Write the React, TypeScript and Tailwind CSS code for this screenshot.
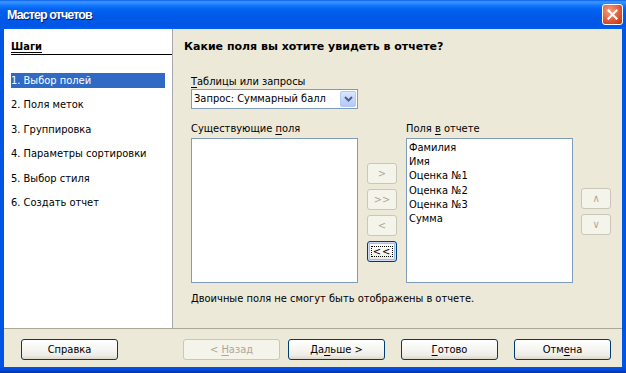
import React from "react";

const btnEnabled =
  "flex items-center justify-center rounded-[3px] border border-[#003C74] bg-[linear-gradient(180deg,#FFFFFF_0%,#F7F6F2_45%,#EEEDE7_80%,#DCD7CB_100%)] text-black";
const btnDisabled =
  "flex items-center justify-center rounded-[3px] border border-[#C9C7BA] bg-[#F5F4EA] text-[#ACA899]";

function Title() {
  return (
    <div className="h-[29px] flex items-center justify-between pl-[7px] pr-[3px] bg-[linear-gradient(180deg,#0A5FE8_0%,#3D95FF_6%,#2A8BFF_12%,#0F74FA_20%,#0363F0_32%,#005AE9_55%,#0057E5_80%,#0056E6_90%,#0060F4_100%)]">
      <span className="text-white font-bold text-[12.5px] leading-[16px] font-['Liberation_Sans',sans-serif] tracking-[-0.9px] [text-shadow:1px_1px_0_#0A1F6B]">
        Мастер отчетов
      </span>
      <div className="w-[21px] h-[21px] rounded-[3px] border border-white bg-[radial-gradient(circle_at_35%_30%,#F0A07F_0%,#E3674A_45%,#CC4320_80%,#B2340F_100%)] flex items-center justify-center">
        <svg width="11" height="11" viewBox="0 0 11 11">
          <path d="M1.5 1.5 L9.5 9.5 M9.5 1.5 L1.5 9.5" stroke="#FFFFFF" strokeWidth="2.2" strokeLinecap="square" />
        </svg>
      </div>
    </div>
  );
}

function U({ children }: { children: React.ReactNode }) {
  return <span className="underline underline-offset-[2px]">{children}</span>;
}

function SmallBtn({ label, disabled, focused }: { label: string; disabled?: boolean; focused?: boolean }) {
  if (focused) {
    return (
      <div className="w-[30px] h-[21px] rounded-[3px] border border-[#003C74] bg-[linear-gradient(180deg,#FFFFFF_0%,#F4F3EE_70%,#E6E3DA_100%)] shadow-[inset_0_0_0_1px_#CFDDF9,inset_0_0_0_2px_#A3BEF0] flex items-center justify-center">
        <span className="border border-dotted border-black px-[1px] leading-[9px] text-[11px] text-black tracking-[1px]">&lt;&lt;</span>
      </div>
    );
  }
  return (
    <div className={"w-[30px] h-[21px] text-[11px] leading-[11px] " + (disabled ? btnDisabled : btnEnabled)}>
      <span>{label}</span>
    </div>
  );
}

function BigBtn({ children, disabled }: { children: React.ReactNode; disabled?: boolean }) {
  return (
    <div className={"w-[97px] h-[21px] text-[11px] leading-[13px] " + (disabled ? btnDisabled : btnEnabled)}>
      <span className="whitespace-pre">{children}</span>
    </div>
  );
}

export default function App() {
  const steps = [
    "1. Выбор полей",
    "2. Поля меток",
    "3. Группировка",
    "4. Параметры сортировки",
    "5. Выбор стиля",
    "6. Создать отчет",
  ];
  const fields = ["Фамилия", "Имя", "Оценка №1", "Оценка №2", "Оценка №3", "Сумма"];
  return (
    <div className="w-[626px] h-[373px] flex flex-col bg-[#0055E5] overflow-hidden font-['DejaVu_Sans_Condensed','DejaVu_Sans',sans-serif] text-[11px] text-black">
      <Title />
      <div className="flex-1 flex flex-col mx-[4px] bg-[#ECE9D8]">
        <div className="h-[299px] flex">
          {/* Steps */}
          <div className="w-[169px] bg-white border-r border-[#A7A6AA] pl-[7px] pt-[11px] flex flex-col">
            <div className="h-[15px] leading-[14px] font-bold border-b border-black">
              <span className="underline underline-offset-[2px]">Шаги</span>
            </div>
            <div className="mt-[18px] flex flex-col gap-[9.4px] mr-[7px]">
              {steps.map((s, i) => (
                <div
                  key={s}
                  className={
                    "h-[15px] leading-[15px] whitespace-nowrap " +
                    (i === 0 ? "bg-[#316AC5] text-white" : "text-black")
                  }
                >
                  {s}
                </div>
              ))}
            </div>
          </div>
          {/* Main */}
          <div className="flex-1 pt-[11px] pl-[11px] flex flex-col">
            <div className="h-[14px] leading-[14px] font-bold font-['DejaVu_Sans',sans-serif]">
              Какие поля вы хотите увидеть в отчете?
            </div>
            <div className="ml-[7px] flex flex-col">
              <div className="mt-[21px] h-[14px] leading-[14px]">
                <U>Т</U>аблицы или запросы
              </div>
              <div className="w-[167px] h-[20px] border border-[#7F9DB9] bg-white flex items-center justify-between pl-[2px] pr-[1px]">
                <span className="leading-[14px]">Запрос: Суммарный балл</span>
                <div className="w-[16px] h-[16px] rounded-[2px] border border-[#B4C8F6] bg-[linear-gradient(180deg,#DCE7FD_0%,#C6D6FB_50%,#B5C9F7_100%)] flex items-center justify-center">
                  <svg width="9" height="6" viewBox="0 0 9 6">
                    <path d="M1 1 L4.5 4.5 L8 1" stroke="#4D6185" strokeWidth="2" fill="none" />
                  </svg>
                </div>
              </div>
              <div className="mt-[13px] flex items-start">
                <div className="flex flex-col">
                  <div className="h-[14px] leading-[14px] mb-[2px]">
                    Существующие <U>п</U>оля
                  </div>
                  <div className="w-[167px] h-[145px] border border-[#7F9DB9] bg-white" />
                </div>
                <div className="ml-[9px] pt-[41px] flex flex-col gap-[5px]">
                  <SmallBtn label=">" disabled />
                  <SmallBtn label=">>" disabled />
                  <SmallBtn label="<" disabled />
                  <SmallBtn label="<<" focused />
                </div>
                <div className="ml-[9px] flex flex-col">
                  <div className="h-[14px] leading-[14px] mb-[2px]">
                    Поля <U>в</U> отчете
                  </div>
                  <div className="w-[167px] h-[145px] border border-[#7F9DB9] bg-white pl-[2px] pt-[2px] flex flex-col">
                    {fields.map((f) => (
                      <div key={f} className="h-[14.2px] leading-[14px]">
                        {f}
                      </div>
                    ))}
                  </div>
                </div>
                <div className="ml-[8px] pt-[66px] flex flex-col gap-[5px]">
                  <SmallBtn label="∧" disabled />
                  <SmallBtn label="∨" disabled />
                </div>
              </div>
              <div className="mt-[9px] h-[14px] leading-[14px]">Двоичные поля не смогут быть отображены в отчете.</div>
            </div>
          </div>
        </div>
        {/* Bottom bar */}
        <div className="h-[39px] border-t border-[#ACA899] pt-[10px] pl-[17px] pr-[11px] flex items-start justify-between">
          <BigBtn>Справка</BigBtn>
          <div className="flex gap-[16px]">
            <div className="flex gap-[8px]">
              <BigBtn disabled>
                {"< "}
                <U>Н</U>азад
              </BigBtn>
              <BigBtn>
                Да<U>л</U>ьше{" >"}
              </BigBtn>
            </div>
            <BigBtn>
              <U>Г</U>отово
            </BigBtn>
            <BigBtn>
              Отм<U>е</U>на
            </BigBtn>
          </div>
        </div>
      </div>
      <div className="h-[6px] bg-[linear-gradient(180deg,#0055E5_0%,#0046D2_60%,#0030A8_100%)]" />
    </div>
  );
}
